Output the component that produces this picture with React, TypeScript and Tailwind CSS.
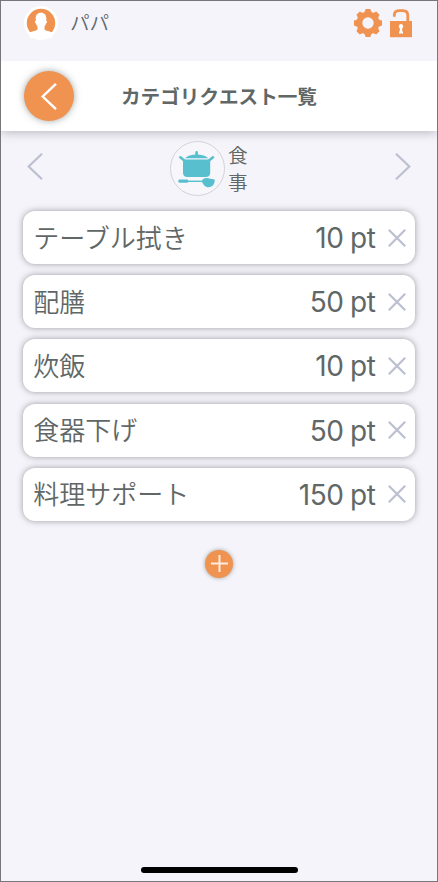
import React from "react";

const quests = [
  { name: "テーブル拭き", points: 10 },
  { name: "配膳", points: 50 },
  { name: "炊飯", points: 10 },
  { name: "食器下げ", points: 50 },
  { name: "料理サポート", points: 150 },
];

function Avatar() {
  return (
    <svg className="h-[34px] w-[34px] shrink-0" viewBox="0 0 34 34">
      <circle cx="17" cy="17" r="17" fill="#fff" />
      <circle cx="17" cy="17" r="14.2" fill="#f09250" />
      <path
        d="M17 6.800c-3.600 0-5.500 2.300-5.300 6.200v1.700c-1.100 0-.9 2.500.3 2.900.3 1.300.8 2.200 1.500 3v2.600c0 1.700-6.500 2-8.900 3.700L6 32H28L29.400 26.900c-2.400-1.700-8.900-2-8.900-3.700v-2.600c.7-.8 1.200-1.700 1.500-3 1.200-.4 1.400-2.900.3-2.900V13C22.500 9.100 20.600 6.800 17 6.800z"
        fill="#fff"
      />
    </svg>
  );
}

function Gear() {
  return (
    <svg className="h-7 w-7" viewBox="-14 -14 28 28" fill="#f09250">
      {[0, 45, 90, 135, 180, 225, 270, 315].map((a) => (
        <path key={a} transform={`rotate(${a})`} d="M-4.800-9.800C-3.600-10.700-2.900-11.800-2.400-14H2.400C2.900-11.800 3.600-10.700 4.800-9.800L3-7H-3z" />
      ))}
      <circle r="8.400" fill="none" stroke="#f09250" strokeWidth="5.400" />
    </svg>
  );
}

function Unlock() {
  return (
    <svg className="h-[29px] w-[22px]" viewBox="0 0 22 29">
      <path d="M4.300 7.800V6.500Q4.300 1.600 9 1.600H13Q17.800 1.600 17.800 6.500V13" fill="none" stroke="#f09250" strokeWidth="2.800" />
      <path d="M0 12H22V28.200H0z" fill="#f09250" />
      <path d="M11 15a2.300 2.300 0 0 0-1.200 4.200V22.500H9v2h4v-2h-.8v-3.300A2.300 2.300 0 0 0 11 15z" fill="#fff" />
    </svg>
  );
}

function Pot() {
  return (
    <svg className="h-[55px] w-[55px] shrink-0" viewBox="0 0 55 55" fill="#58bfcf">
      <circle cx="27.500" cy="27.500" r="27" fill="#f7f6fb" stroke="#d3d2d8" strokeWidth="1" />
      <path d="M25.300 11.200q0-1.200 1.300-1.200t1.300 1.200v2.400c5 .4 8.800 1.800 10.300 3.700H15c1.500-1.900 5.300-3.300 10.300-3.700z" />
      <path d="M13 18.600H40.200V31.500q0 4.500-4.500 4.500H17.500Q13 36 13 31.500z" />
      <path d="M14 19.200L10.300 16.300M39.300 19.200L43 16.300" stroke="#58bfcf" strokeWidth="2.600" strokeLinecap="round" />
      <rect x="8.300" y="38.500" width="10" height="3.300" rx="1.400" />
      <path d="M17 39.600H33V41H17z" />
      <path d="M31.800 40.500C32.500 37.400 35 36.900 38 37.200L44.700 38.600C45 43 42.500 46.300 38.600 46.300 35 46.300 33.400 43.800 31.800 40.500z" />
    </svg>
  );
}

function Chevron({ right = false }: { right?: boolean }) {
  return (
    <svg className="h-[27px] w-4" viewBox="0 0 16 27" fill="none" stroke="#bcbfd0" strokeWidth="2.200">
      <path d={right ? "M1 .8L14.300 13.500 1 26.200" : "M15 .8L1.700 13.500 15 26.200"} />
    </svg>
  );
}

export default function App() {
  return (
    <main className="flex h-[882px] w-[438px] flex-col overflow-hidden border border-[#77767a] bg-[#f5f4fa] font-['Inter','Noto_Sans_CJK_JP',sans-serif] text-[#606766]">
      <header className="relative z-10 flex h-[60px] shrink-0 items-start bg-[#f5f4fa] pr-[25px] pl-[23px] pt-[5px]">
        <Avatar />
        <span className="ml-3 pt-[2px] text-[19.600px] leading-[30px] font-[350]">パパ</span>
        <div className="ml-auto flex pt-[3px]">
          <Gear />
          <div className="ml-2">
            <Unlock />
          </div>
        </div>
      </header>

      <div className="grid h-[70px] shrink-0 grid-cols-[50px_1fr_50px] items-center bg-white px-[22.500px] shadow-[0_1px_10px_rgba(80,80,90,0.400)]">
        <button className="flex h-[50px] w-[50px] items-center justify-center rounded-full bg-[#f09250] shadow-[0_0_7px_rgba(70,80,80,0.500)]">
          <svg className="h-[27px] w-4" viewBox="0 0 16 27" fill="none" stroke="#fff" strokeWidth="2.400">
            <path d="M15 .8L1.700 13.500 15 26.200" />
          </svg>
        </button>
        <h1 className="pt-[2px] text-center text-[19.600px] leading-7 font-bold whitespace-nowrap">カテゴリクエスト一覧</h1>
      </div>

      <nav className="grid h-20 shrink-0 grid-cols-[143px_1fr_16px] items-start pr-[26px] pl-[26px] pt-[10px]">
        <div className="pt-[12px]"><Chevron /></div>
        <div className="flex items-start gap-[3px]">
          <Pot />
          <div className="w-5 pt-[2px] text-[19.600px] leading-[27px] font-[350]">食事</div>
        </div>
        <div className="pt-[12px]"><Chevron right /></div>
      </nav>

      <ul className="flex flex-col gap-[11.200px] pr-[22px] pl-[22.300px]">
        {quests.map((q) => (
          <li key={q.name} className="flex h-[53px] items-center rounded-[12px] bg-white pr-[9.500px] pl-[10px] shadow-[0_0_6px_rgba(80,80,85,0.550)]">
            <span className="pt-[2px] text-[26px] leading-9 font-[350]">{q.name}</span>
            <span className="ml-auto pt-px text-[28px] leading-9 font-normal tracking-[-0.400px] [word-spacing:-1px]">{q.points} pt</span>
            <svg className="ml-3 h-[18px] w-[18px]" viewBox="0 0 18 18" stroke="#bcbfd0" strokeWidth="2.200">
              <path d="M.8.8L17.200 17.200M17.200.8L.8 17.200" />
            </svg>
          </li>
        ))}
      </ul>

      <button className="mt-[29px] flex h-7 w-7 items-center justify-center self-center rounded-full bg-[#f09250] shadow-[0_0_4px_rgba(70,80,80,0.500)]">
        <svg className="h-[17px] w-[17px]" viewBox="0 0 17 17" stroke="#ffebdc" strokeWidth="2">
          <path d="M8.500 0V17M0 8.500H17" />
        </svg>
      </button>

      <div className="mt-auto mb-2 h-[6px] w-[157px] shrink-0 self-center rounded-full bg-black" />
    </main>
  );
}
